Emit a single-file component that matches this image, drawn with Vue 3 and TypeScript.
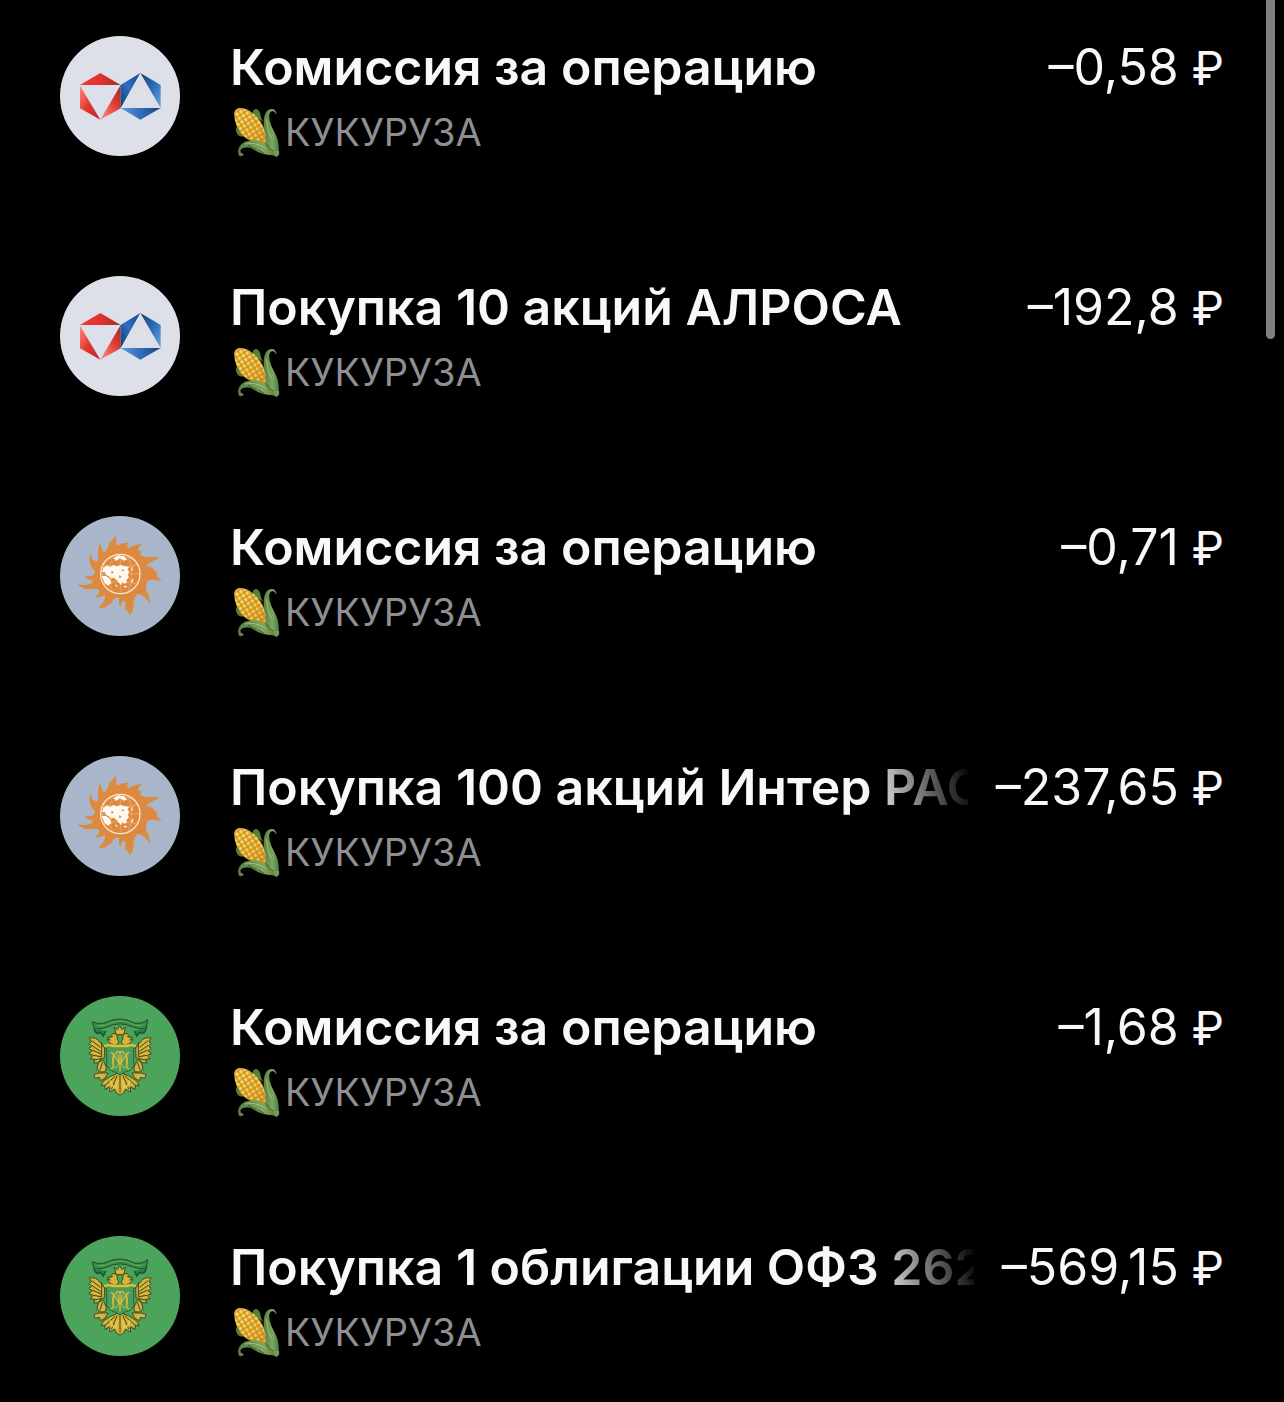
<script setup lang="ts">
type Brand = 'alrosa' | 'inter' | 'minfin'

interface Operation {
  id: number
  brand: Brand
  title: string
  account: string
  amount: string
}

const operations: Operation[] = [
  { id: 1, brand: 'alrosa', title: 'Комиссия за операцию', account: 'КУКУРУЗА', amount: '–0,58' },
  { id: 2, brand: 'alrosa', title: 'Покупка 10 акций АЛРОСА', account: 'КУКУРУЗА', amount: '–192,8' },
  { id: 3, brand: 'inter', title: 'Комиссия за операцию', account: 'КУКУРУЗА', amount: '–0,71' },
  { id: 4, brand: 'inter', title: 'Покупка 100 акций Интер РАО', account: 'КУКУРУЗА', amount: '–237,65' },
  { id: 5, brand: 'minfin', title: 'Комиссия за операцию', account: 'КУКУРУЗА', amount: '–1,68' },
  { id: 6, brand: 'minfin', title: 'Покупка 1 облигации ОФЗ 262', account: 'КУКУРУЗА', amount: '–569,15' },
]
</script>

<template>
  <main class="screen">
    <svg class="defs" width="0" height="0" aria-hidden="true">
      <defs>
        <linearGradient id="red-top" x1="0" x2="1"><stop offset="0" stop-color="#f0382c" /><stop offset=".5" stop-color="#dd352d" /><stop offset="1" stop-color="#a82a26" /></linearGradient>
        <linearGradient id="red-left" x1="0" x2="1" y1="0" y2="1"><stop offset="0" stop-color="#f58a78" /><stop offset=".5" stop-color="#e3382e" /><stop offset="1" stop-color="#b02a24" /></linearGradient>
        <linearGradient id="red-right" x1="1" x2="0" y1="0" y2="1"><stop offset="0" stop-color="#8f2a2c" /><stop offset=".4" stop-color="#e03a30" /><stop offset="1" stop-color="#f39a86" /></linearGradient>
        <linearGradient id="blue-left" x1="0" x2="1" y1="1" y2="0"><stop offset="0" stop-color="#123a72" /><stop offset=".5" stop-color="#2c6fc0" /><stop offset="1" stop-color="#17437f" /></linearGradient>
        <linearGradient id="blue-right" x1="0" x2="1" y1="0" y2="1"><stop offset="0" stop-color="#153c73" /><stop offset=".55" stop-color="#2d70bd" /><stop offset="1" stop-color="#6fa8e2" /></linearGradient>
        <linearGradient id="blue-bottom" x1="0" x2="1"><stop offset="0" stop-color="#5b9be0" /><stop offset=".5" stop-color="#2f6fba" /><stop offset="1" stop-color="#1a4179" /></linearGradient>
        <linearGradient id="cob" x1="0" x2="1" y1="0" y2="1"><stop offset="0" stop-color="#fadb62" /><stop offset=".6" stop-color="#f0c245" /><stop offset="1" stop-color="#cf952c" /></linearGradient>
        <linearGradient id="husk" x1="0" x2="1"><stop offset="0" stop-color="#587f42" /><stop offset=".6" stop-color="#7fa65e" /><stop offset="1" stop-color="#527a3d" /></linearGradient>
        <pattern id="kernels" width="14" height="14" patternUnits="userSpaceOnUse" patternTransform="rotate(-32)">
          <path d="M0 0H14M0 14H14M0 0V14M14 0V14" stroke="#bb7c18" stroke-width="3" />
          <circle cx="6" cy="6" r="2" fill="#fff0a0" />
        </pattern>
        <clipPath id="globe-clip"><circle cx="211" cy="204" r="58" /></clipPath>
      </defs>
      <symbol id="logo-alrosa" viewBox="30 30 360 360">
        <circle cx="210" cy="210" r="180" fill="#dde0e8" />
        <path d="M151 141 212 177H90Z" fill="url(#red-top)" />
        <path d="M90 179 151 281 90 247Z" fill="url(#red-left)" />
        <path d="M212 177V247L151 281Z" fill="url(#red-right)" />
        <path d="M271 141 212 246V177Z" fill="url(#blue-left)" />
        <path d="M271 141 332 177V246Z" fill="url(#blue-right)" />
        <path d="M212 246H332L271 281Z" fill="url(#blue-bottom)" />
      </symbol>
      <symbol id="logo-inter" viewBox="30 30 360 360">
        <circle cx="210" cy="210" r="180" fill="#a9b6ca" />
        <path
          fill="#de8a3e"
          d="M201 90Q194 106 203 120Q218 107 235 112Q228 120 236 127Q255 114 277 115Q262 124 265 134L275 136Q268 144 274 151Q300 157 328 151Q320 162 303 168Q288 173 291 181Q306 182 314 194Q325 202 320 208Q326 220 338 228Q315 219 299 222Q286 226 290 233Q285 248 292 261Q302 277 299 292Q291 276 277 270Q268 261 263 265Q249 275 251 295Q249 317 239 329Q239 318 227 311Q229 294 224 283Q213 286 212 303Q204 292 208 277Q201 268 193 278Q186 292 171 301Q157 309 141 307Q156 300 163 281Q168 270 164 267Q151 275 137 274Q147 265 148 252Q136 245 122 250Q101 250 92 242L83 235Q103 240 119 234Q130 231 128 224Q114 222 102 211Q116 212 130 207Q139 200 133 192Q119 181 118 163Q116 149 124 144Q122 158 135 166Q145 168 145 154Q142 130 151 109Q152 125 160 137Q168 139 174 124Q181 101 201 90Z"
        />
        <g clip-path="url(#globe-clip)">
          <g fill="none" stroke="#efc49a" stroke-width="1.5">
            <path d="M211 146V264M151 204H271M158 175Q211 192 264 175M158 235Q211 218 264 235M190 146Q164 204 190 264M232 146Q258 204 232 264" />
          </g>
          <path
            fill="#fff9f1"
            d="M160 184 170 179 181 182 190 177 201 181 211 177 222 180 238 183 232 190 238 198 233 206 237 214 229 222 231 230 222 233 217 228 213 237 207 230 199 221 191 215 184 218 177 211 168 207 166 199 156 198Z"
          />
          <path fill="#fff9f1" d="M190 156 204 148 222 151 232 160 221 164 210 157 198 165ZM155 209 168 210 181 220 184 232 174 239 163 230ZM194 235 203 240 199 243ZM219 239 231 240 227 246ZM243 190 249 180 246 197ZM244 223 251 218 246 232Z" />
          <path d="M185 193 191 200 184 204ZM207 207 216 214 208 217ZM216 190 225 194 216 196Z" fill="#de8a3e" />
        </g>
        <circle cx="211" cy="204" r="59" fill="none" stroke="#f8e4cf" stroke-width="4" />
      </symbol>
      <symbol id="logo-minfin" viewBox="30 30 360 360">
        <circle cx="210" cy="210" r="180" fill="#4ba35c" />
        <path d="M127 108Q145 117 168 110Q210 88 250 110Q273 117 293 101L289 126Q270 132 248 123Q210 104 171 123Q148 132 132 127Z" fill="#348e4c" stroke="#174d2b" stroke-width="3" />
        <path d="M143 119Q160 121 177 113Q211 97 244 113Q262 121 280 117" fill="none" stroke="#a8bf55" stroke-width="3" stroke-dasharray="4 3" />
        <path d="M132 127Q136 148 152 139L160 150 168 135M289 126Q286 148 269 139L260 150 253 135" fill="#2f7d43" stroke="#174d2b" stroke-width="4" />
        <g fill="#d9b33b" stroke="#3c4d20" stroke-width="3" stroke-linejoin="round">
          <path d="M198 146 193 124 202 131 209 119 216 131 226 124 222 146Z" />
          <path d="M190 177Q180 174 171 161L181 162 171 153 184 154Q181 144 192 143Q204 144 201 158L207 168 195 181ZM230 177Q240 174 249 161L239 162 249 153 236 154Q239 144 228 143Q216 144 219 158L213 168 225 181Z" />
          <path d="M149 168Q140 152 118 156L124 168 117 172 125 181 117 187 127 195 116 202 129 208 121 219 135 220 130 231 145 230 153 218 163 215 164 186ZM271 168Q280 152 303 156L297 168 304 172 296 181 304 187 294 195 305 202 292 208 300 219 286 220 291 231 276 230 268 218 258 215 257 186Z" />
          <path d="M145 231 141 250 153 258 166 257 169 244 159 221ZM275 231 279 250 267 258 254 257 252 244 262 221Z" />
          <path d="M149 261 131 265 136 277 148 274 152 284 165 277 174 261ZM272 261 289 265 284 277 272 274 268 284 255 277 246 261Z" />
          <path d="M207 260 184 270 160 285 153 300 164 297 166 310 178 302 180 318 194 309 200 322 210 327 220 322 227 309 241 318 242 302 255 310 256 297 268 300 260 285 237 270Z" />
        </g>
        <path d="M163 181H257V187H251V239Q242 255 226 258L210 266 194 258Q177 254 170 239V187H163Z" fill="#489d57" stroke="#24643b" stroke-width="3" />
        <path d="M163 181Q175 175 189 180H231Q246 175 257 181" fill="none" stroke="#e0bb3e" stroke-width="8" />
        <g fill="none" stroke="#34471e" stroke-width="3">
          <path d="M126 164 151 184M125 178 152 197M127 192 153 204M130 208 153 212M135 222 155 217M294 164 269 184M295 178 268 197M293 192 267 204M290 208 267 212M285 222 265 217M155 169V213M265 169V213" />
          <path d="M210 266V320M202 268 184 310M218 268 237 310M196 270 165 298M225 270 256 298M158 228 150 251M262 228 270 251" />
        </g>
        <g fill="none" stroke="#dfba43" stroke-width="4" stroke-linecap="round" stroke-linejoin="round">
          <path d="M183 200Q190 200 190 207V240Q189 249 182 248M237 200Q230 200 230 207V240Q231 249 238 248M190 204 210 236 230 204M210 198V254M198 198H222" />
          <ellipse cx="197" cy="224" rx="9" ry="21" stroke-width="3" />
          <ellipse cx="223" cy="224" rx="9" ry="21" stroke-width="3" />
        </g>
        <path d="M181 284Q185 300 194 305M239 284Q235 300 226 305M202 283 198 308M218 283 222 308" fill="none" stroke="#efcf57" stroke-width="4" />
        <circle cx="187" cy="151" r="2" fill="#34471e" />
        <circle cx="233" cy="151" r="2" fill="#34471e" />
      </symbol>
      <symbol id="corn" viewBox="30 18 156 156">
        <path d="M98 42Q98 27 109 27Q119 30 122 47L128 66ZM49 80Q45 95 53 104Q60 112 70 109Z" fill="#547f3d" />
        <path d="M43 38Q46 24 62 24Q80 25 98 40Q119 55 133 86L145 125Q132 139 108 126Q79 122 62 99Q42 69 43 38Z" fill="url(#cob)" />
        <path d="M43 38Q46 24 62 24Q80 25 98 40Q119 55 133 86L145 125Q132 139 108 126Q79 122 62 99Q42 69 43 38Z" fill="url(#kernels)" />
        <path d="M56 166Q50 147 65 132Q83 118 112 122Q138 127 163 151L177 161 170 170 157 166Q125 165 105 151Q83 135 64 147Q56 157 72 163Q64 173 56 166Z" fill="url(#husk)" />
        <path d="M168 46Q166 32 155 34Q144 39 149 62Q154 81 166 102Q179 126 176 159L159 157Q143 147 137 131Q140 108 132 84Q128 53 138 37Q147 24 161 28Q172 34 168 46Z" fill="url(#husk)" />
        <path d="M139 56Q141 91 154 116M74 132Q105 124 140 146" fill="none" stroke="#9cc077" stroke-width="3" />
        <path d="M137 131Q145 149 163 155M84 137Q110 148 132 160" fill="none" stroke="#38572c" stroke-width="3" />
        <path d="M159 156 175 151Q181 157 177 165L169 171Z" fill="#7a9a5a" />
      </symbol>
    </svg>

    <ul class="operations">
      <li v-for="op in operations" :key="op.id" class="operation">
        <svg class="logo" aria-hidden="true"><use :href="`#logo-${op.brand}`" /></svg>
        <div class="details">
          <div class="headline">
            <h2 class="title">{{ op.title }}</h2>
            <span class="amount">{{ op.amount }}<span class="currency">&nbsp;₽</span></span>
          </div>
          <p class="account">
            <svg class="corn" aria-hidden="true"><use href="#corn" /></svg>
            <span>{{ op.account }}</span>
          </p>
        </div>
      </li>
    </ul>
    <div class="scroll-thumb" aria-hidden="true"></div>
  </main>
</template>

<style>
body {
  margin: 0;
  background: #000;
}
</style>

<style scoped>
.screen {
  position: relative;
  overflow: hidden;
  min-height: 100vh;
  box-sizing: border-box;
  background: #000;
  color: #f8f8fa;
  font-family: Inter, "Liberation Sans", sans-serif;
}
.defs {
  position: absolute;
}
.operations {
  display: flex;
  flex-direction: column;
  gap: 110px;
  margin: 0;
  padding: 36px 60px;
  list-style: none;
}
.operation {
  display: flex;
  align-items: flex-start;
  gap: 50px;
}
.logo {
  flex: none;
  width: 120px;
  height: 120px;
}
.details {
  flex: 1;
  min-width: 0;
}
.headline {
  display: flex;
  gap: 28px;
}
.title {
  flex: 1;
  min-width: 0;
  margin: 0;
  overflow: hidden;
  font-size: 50px;
  font-weight: 600;
  line-height: 62px;
  white-space: nowrap;
  mask-image: linear-gradient(80deg, #000 calc(100% - 108px), transparent);
}
.amount {
  flex: none;
  font-size: 50px;
  line-height: 62px;
  white-space: nowrap;
}
.currency {
  font-size: 46px;
  line-height: 1;
}
.account {
  display: flex;
  align-items: center;
  gap: 3px;
  margin: 0;
  color: #8e8e93;
  font-size: 38px;
  line-height: 68px;
}
.corn {
  flex: none;
  width: 52px;
  height: 52px;
}
.scroll-thumb {
  position: absolute;
  top: 0;
  right: 9px;
  width: 9px;
  height: 339px;
  border-radius: 0 0 5px 5px;
  background: #808080;
}
</style>
